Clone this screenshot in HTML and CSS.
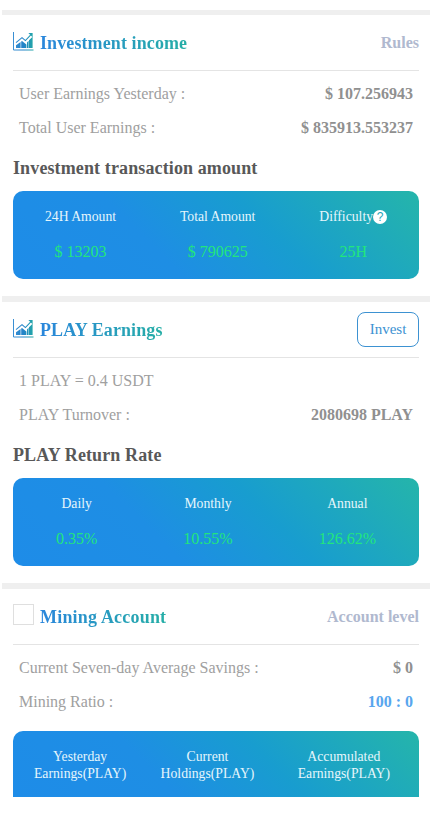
FILE: index.html
```html
<!DOCTYPE html>
<html lang="en">
<head>
    <meta charset="UTF-8">
    <meta name="viewport" content="width=device-width, initial-scale=1.0">
    <title>Investment income</title>
    <link rel="stylesheet" href="styles.css">
</head>
<body>
    <svg class="defs" width="0" height="0">
        <defs>
            <linearGradient id="iconFill" gradientUnits="userSpaceOnUse" x1="0" y1="0" x2="21" y2="0">
                <stop offset="0" stop-color="#3a8fd4"/>
                <stop offset="0.5" stop-color="#2383c8"/>
                <stop offset="1" stop-color="#22aaa4"/>
            </linearGradient>
            <symbol id="chart" viewBox="0 0 21 19">
                <path d="M0.5 0V18H20.5" fill="none" stroke="url(#iconFill)" stroke-width="1"/>
                <path d="M3 16V13.2L7.6 10V16ZM8.2 16V9.6L9 9L13.4 12.6V16ZM14 16V10.4L15.6 8.8V16ZM16 16V8.2L19.6 4.8V16Z" fill="url(#iconFill)"/>
                <path d="M3 10.6L9 5.6L12.4 8.6L18 2.6" fill="none" stroke="url(#iconFill)" stroke-width="1.1"/>
                <path d="M15.4 1H19.6V5.2Z" fill="url(#iconFill)"/>
            </symbol>
        </defs>
    </svg>

    <div class="app">
        <section class="block">
            <div class="block-header">
                <svg class="icon" width="21" height="19"><use href="#chart"/></svg>
                <h2 class="title">Investment income</h2>
                <a class="link">Rules</a>
            </div>
            <div class="row"><span class="label">User Earnings Yesterday :</span><b class="value">$ 107.256943</b></div>
            <div class="row"><span class="label">Total User Earnings :</span><b class="value">$ 835913.553237</b></div>
            <h3 class="subtitle">Investment transaction amount</h3>
            <div class="panel">
                <div class="cell"><span class="name">24H Amount</span><span class="num">$ 13203</span></div>
                <div class="cell"><span class="name">Total Amount</span><span class="num">$ 790625</span></div>
                <div class="cell">
                    <span class="name">Difficulty<i class="help">?</i></span>
                    <span class="num">25H</span>
                </div>
            </div>
        </section>

        <section class="block play">
            <div class="block-header">
                <svg class="icon" width="21" height="19"><use href="#chart"/></svg>
                <h2 class="title">PLAY Earnings</h2>
                <button class="invest">Invest</button>
            </div>
            <div class="row"><span class="label">1 PLAY = 0.4 USDT</span></div>
            <div class="row"><span class="label">PLAY Turnover :</span><b class="value">2080698 PLAY</b></div>
            <h3 class="subtitle">PLAY Return Rate</h3>
            <div class="panel">
                <div class="cell"><span class="name">Daily</span><span class="num">0.35%</span></div>
                <div class="cell"><span class="name">Monthly</span><span class="num">10.55%</span></div>
                <div class="cell"><span class="name">Annual</span><span class="num">126.62%</span></div>
            </div>
        </section>

        <section class="block mining">
            <div class="block-header">
                <span class="empty-icon"></span>
                <h2 class="title">Mining Account</h2>
                <a class="link">Account level</a>
            </div>
            <div class="row"><span class="label">Current Seven-day Average Savings :</span><b class="value">$ 0</b></div>
            <div class="row"><span class="label">Mining Ratio :</span><b class="value ratio">100 : 0</b></div>
            <div class="panel cut">
                <div class="cell"><span class="name">Yesterday<br>Earnings(PLAY)</span></div>
                <div class="cell"><span class="name">Current<br>Holdings(PLAY)</span></div>
                <div class="cell"><span class="name">Accumulated<br>Earnings(PLAY)</span></div>
            </div>
        </section>
    </div>
</body>
</html>
```

FILE: styles.css
```css
* {
    box-sizing: border-box;
}

body {
    margin: 0;
    background: #fff;
    font-family: "Liberation Serif", "Times New Roman", serif;
}

.defs {
    display: block;
}

.app {
    width: 428px;
    margin-left: 2px;
    padding-top: 10px;
}

.block {
    height: 286px;
    border-top: 5px solid #efefef;
    padding: 0 11px;
}

.play {
    height: 287px;
    border-top-width: 6px;
}

.mining {
    height: 214px;
    border-top-width: 6px;
}

.block-header {
    display: flex;
    align-items: center;
    height: 56px;
    border-bottom: 1px solid #e4e4e4;
    margin-bottom: 6px;
}

.icon {
    margin-right: 6px;
    margin-top: -3px;
}

.empty-icon {
    width: 21px;
    height: 21px;
    border: 1px solid #dfdfdf;
    margin-right: 6px;
    margin-top: -4px;
}

.title {
    margin: 0;
    font-size: 18px;
    line-height: 24px;
    letter-spacing: 0.1px;
    background: linear-gradient(90deg, #2a86dc, #25aea6);
    -webkit-background-clip: text;
    background-clip: text;
    color: transparent;
}

.mining .title {
    letter-spacing: 0.2px;
}

.link {
    margin-left: auto;
    color: #b0b9cf;
    font-size: 16px;
    font-weight: bold;
}

.invest {
    margin-left: auto;
    width: 62px;
    height: 35px;
    padding: 0;
    border: 1px solid #3d92d2;
    border-radius: 8px;
    background: #fff;
    color: #3d92d2;
    font-family: inherit;
    font-size: 15px;
}

.row {
    display: flex;
    justify-content: space-between;
    align-items: center;
    height: 34px;
    padding: 0 6px;
    font-size: 16px;
}

.label {
    color: #a0a0a0;
}

.value {
    color: #909090;
}

.ratio {
    color: #58a6ee;
}

.subtitle {
    margin: 0;
    height: 46px;
    line-height: 47px;
    font-size: 18px;
    letter-spacing: 0.12px;
    color: #585858;
}

.panel {
    display: flex;
    justify-content: space-around;
    height: 88px;
    padding-top: 16px;
    border-radius: 10px;
    background: linear-gradient(45deg, #1e8ce8 0%, #1e8ee4 35%, #189dcf 62%, #25b5aa 100%);
    text-align: center;
}

.cell {
    display: flex;
    flex-direction: column;
}

.name {
    display: flex;
    justify-content: center;
    align-items: center;
    height: 20px;
    color: #e6f6fc;
    font-size: 13.7px;
}

.num {
    margin-top: 14px;
    line-height: 21px;
    color: #22e67c;
    font-size: 16px;
}

.help {
    width: 14px;
    height: 14px;
    border-radius: 50%;
    background: #fff;
    color: #25a5b8;
    font: 12px/14px "Liberation Sans", Arial, sans-serif;
}

/* last panel runs off the bottom of the view */
.cut {
    justify-content: space-between;
    height: 66px;
    margin-top: 12px;
    padding-left: 21px;
    padding-right: 29px;
    border-radius: 10px 10px 0 0;
}

.cut .name {
    display: block;
    height: auto;
    margin-top: 1px;
    line-height: 17px;
}

.cut .cell:nth-child(2) {
    margin-right: 9px;
}
```
